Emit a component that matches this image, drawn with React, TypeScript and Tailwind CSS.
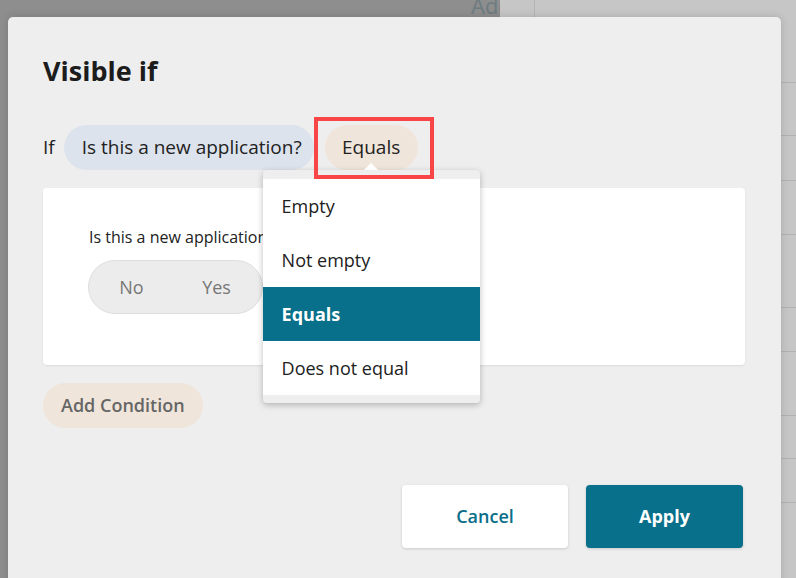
const options = ['Empty', 'Not empty', 'Equals', 'Does not equal']
const selected = 'Equals'

const stripRows = [83, 53, 45, 54, 73, 44, 64, 43, 44]

function Backdrop() {
  return (
    <div className="absolute inset-0 flex">
      <div className="w-[500px] h-full bg-[#8e8e8e] overflow-hidden whitespace-nowrap">
        <div className="pl-[471px] -mt-[11px] text-[22px] text-[#6d7c82]">Add</div>
      </div>
      <div className="flex-1 h-full bg-[#c6c6c6] flex">
        <div className="w-[35px] h-full border-r border-[#b4b4b4]" />
        <div className="flex-1 flex flex-col">
          {stripRows.map((h, i) => (
            <div key={i} className="border-b border-[#b2b2b2]" style={{ height: h }} />
          ))}
        </div>
      </div>
    </div>
  )
}

function OperatorDropdown() {
  return (
    <div className="absolute left-[-62px] top-full w-[217px] z-10">
      <div className="absolute left-1/2 -translate-x-1/2 -top-[7px] w-0 h-0 border-l-[7px] border-r-[7px] border-b-[7px] border-l-transparent border-r-transparent border-b-white" />
      <div className="rounded-[4px] bg-[#eeeeee] pt-[9px] pb-[8px] shadow-[0_2px_6px_rgba(0,0,0,0.25)]">
        <div className="bg-white">
          {options.map((o) => (
            <div
              key={o}
              className={
                o === selected
                  ? 'h-[54px] flex items-center pl-[19px] text-[18px] font-bold text-white bg-[#08708a]'
                  : 'h-[54px] flex items-center pl-[19px] text-[18px] text-[#212121]'
              }
            >
              {o}
            </div>
          ))}
        </div>
      </div>
    </div>
  )
}

export default function App() {
  return (
    <div className="relative w-[796px] h-[578px] overflow-hidden font-['Open_Sans',sans-serif]">
      <Backdrop />

      <div className="absolute left-[8px] top-[17px] w-[773px] h-[600px] rounded-[5px] bg-[#eeeeee] shadow-[0_0_8px_rgba(0,0,0,0.15)] pt-[36px] pl-[35px] pr-[36px]">
        <h2 className="text-[27px] leading-[36px] font-bold text-[#1c1c1c]">Visible if</h2>

        <div className="mt-[36px] flex items-center h-[45px]">
          <span className="text-[19px] text-[#222] mr-[9px]">If</span>
          <div className="h-[45px] flex items-center pl-[18px] pr-[12px] rounded-full bg-[#dde3ec] text-[19px] text-[#222]">
            Is this a new application?
          </div>
          <div className="relative ml-[11px]">
            <div className="h-[45px] w-[93px] flex items-center justify-center rounded-full bg-[#f0e5da] text-[19px] text-[#222]">
              Equals
            </div>
            <OperatorDropdown />
            <div className="absolute -left-[11px] -right-[16px] -top-[8px] -bottom-[9px] border-[4px] border-[#f84646] z-20 pointer-events-none" />
          </div>
        </div>

        <div className="mt-[18px] h-[177px] rounded-[4px] bg-white pt-[38px] pl-[45px] shadow-[0_1px_2px_rgba(0,0,0,0.08)]">
          <div className="pl-[1px] text-[16px] leading-[22px] text-[#222]">Is this a new application?</div>
          <div className="mt-[12px] w-[175px] h-[54px] flex rounded-full bg-[#ececec] border border-[#dedede] text-[18px] text-[#777]">
            <div className="flex-1 flex items-center justify-center">No</div>
            <div className="flex-1 flex items-center justify-center pr-[3px]">Yes</div>
          </div>
        </div>

        <div className="mt-[18px] inline-flex h-[45px] items-center px-[18px] rounded-full bg-[#f0e5da] text-[18px] font-semibold text-[#666]">
          Add Condition
        </div>

        <div className="mt-[57px] mr-[2px] flex justify-end gap-[18px]">
          <button className="w-[166px] h-[63px] rounded-[4px] bg-white text-[18px] font-semibold text-[#0a6e89] shadow-[0_1px_3px_rgba(0,0,0,0.15)]">
            Cancel
          </button>
          <button className="w-[157px] h-[63px] rounded-[4px] bg-[#08708a] text-[18px] font-bold text-white shadow-[0_1px_3px_rgba(0,0,0,0.15)]">
            Apply
          </button>
        </div>
      </div>
    </div>
  )
}
